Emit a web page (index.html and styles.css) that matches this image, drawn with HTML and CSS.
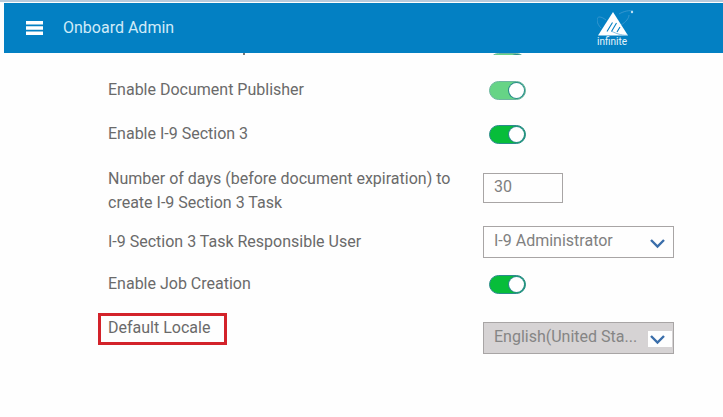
FILE: index.html
```html
<!DOCTYPE html>
<html lang="en">
<head>
    <meta charset="UTF-8">
    <meta name="viewport" content="width=device-width, initial-scale=1.0">
    <title>Onboard Admin</title>
    <link rel="stylesheet" href="styles.css">
</head>
<body>

<header class="header">
    <button class="menu-btn" type="button" aria-label="Menu">
        <svg width="17" height="14" viewBox="0 0 17 14"><path d="M0 0h17v3.5H0zM0 5.2h17v3.5H0zM0 10.4h17v3.5H0z" fill="#fff"/></svg>
    </button>
    <h1 class="title">Onboard Admin</h1>
    <div class="logo">
        <svg width="38" height="27" viewBox="0 0 38 27">
            <path d="M16 2L1 25.500h30z" fill="#fff"/>
            <path d="M15.500 12.500l-5.500 9M19.500 13l-5 8.500M23 17l-3 5" stroke="#0380c3" stroke-width="1.100" fill="none"/>
            <path d="M9 10C4 6 0 6 0 10c0 3 2 6 4 8M22 4c5-3 11-4 14-3M24 15c5-3 8-7 8-10" stroke="#4a9fd2" stroke-width="0.700" fill="none"/>
            <path d="M14 21c6 3 13 5 17 4" stroke="#65afda" stroke-width="0.800" fill="none"/>
            <circle cx="35" cy="2" r="1.200" fill="#bfe0f2"/>
        </svg>
        <span class="logo-text">infinite</span>
    </div>
</header>

<main class="settings">
    <!-- row scrolled under the header -->
    <div class="row row-scrolled">
        <span class="descender"></span>
        <div class="control"><input class="toggle" type="checkbox" aria-label="Setting" checked disabled></div>
    </div>
    <div class="row">
        <label for="publisher">Enable Document Publisher</label>
        <div class="control"><input class="toggle" type="checkbox" id="publisher" checked disabled></div>
    </div>
    <div class="row">
        <label for="section3">Enable I-9 Section 3</label>
        <div class="control"><input class="toggle" type="checkbox" id="section3" checked></div>
    </div>
    <div class="row row-days">
        <label for="days">Number of days (before document expiration) to create I-9 Section 3 Task</label>
        <div class="control"><input class="number" type="text" inputmode="numeric" id="days" value="30"></div>
    </div>
    <div class="row">
        <label for="user">I-9 Section 3 Task Responsible User</label>
        <div class="control select-box">
            <select id="user"><option>I-9 Administrator</option></select>
            <svg class="chevron" width="24" height="16" viewBox="0 0 24 16"><path d="M3 5l6.500 6.500L16 5" fill="none" stroke="#3a6eaa" stroke-width="2.400"/></svg>
        </div>
    </div>
    <div class="row row-jobs">
        <label for="jobs">Enable Job Creation</label>
        <div class="control"><input class="toggle" type="checkbox" id="jobs" checked></div>
    </div>
    <div class="row row-locale">
        <label for="locale"><span class="highlight">Default Locale</span></label>
        <div class="control select-box">
            <select id="locale" disabled><option>English(United Sta...</option></select>
            <svg class="chevron" width="24" height="16" viewBox="0 0 24 16"><path d="M3 5l6.500 6.500L16 5" fill="none" stroke="#3a6eaa" stroke-width="2.400"/></svg>
        </div>
    </div>
</main>

</body>
</html>
```
FILE: styles.css
```css
* { box-sizing: border-box; }
body { margin: 0; background: #fefefe; border-top: 2px solid #b8cbdc; color: #6a6a6a; font: 16px/24px Roboto, "Noto Sans", sans-serif; }
.header { display: flex; align-items: center; height: 50px; margin: 1px 0 0 4px; padding: 0 88px 0 22px; background: #0380c3; color: #d0ebf8; }
.menu-btn { display: flex; padding: 0; border: 0; background: none; cursor: pointer; }
.title { margin: 0 auto 0 20px; font-size: 16px; font-weight: 400; }
.logo { display: flex; flex-direction: column; width: 38px; }
.logo-text { font-size: 10px; line-height: 10px; color: #e5f4fb; }

.settings { padding: 0 49px 24px 108px; }
.row { display: grid; grid-template-columns: 375fr 191fr; align-items: center; min-height: 44px; }
.row-scrolled { height: 2px; min-height: 0; margin-bottom: 13px; overflow: hidden; align-items: end; }
.descender { width: 2px; height: 2px; margin-left: 135px; background: #777; align-self: start; }
.row-days { min-height: 64px; }
.row-days label { padding: 6px 16px 0 0; }
.row-jobs { min-height: 40px; }
.row-locale { align-items: start; padding-top: 9px; }
.row-locale .control { margin-top: 9px; }
.highlight { display: inline-block; margin-left: -10px; padding: 0 14px 2px 7px; border: 3px solid #d3222a; }

.control { display: flex; }
.toggle { appearance: none; display: flex; justify-content: flex-end; width: 37px; height: 19px; margin: 0 0 0 6px; border: 1px solid #2b8c8c; border-radius: 10px; background: #07bd3a; cursor: pointer; }
.toggle::before { content: ""; width: 15px; height: 15px; margin: 1px; border-radius: 50%; background: #fff; box-shadow: 0 0 0 1px #2b8c8c; }
.toggle:disabled { background: #66d486; border-color: #6db6a0; cursor: default; }

.number, select { border: 1px solid #a8a5a5; border-radius: 0; background: #fefefe; color: #808080; font: inherit; padding: 0 10px; opacity: 1; }
.number { width: 80px; height: 30px; padding-bottom: 4px; }
.select-box { position: relative; }
select { appearance: none; width: 100%; height: 32px; padding-bottom: 2px; }
select:disabled { background: #d6d3d4; color: #858585; }
.chevron { position: absolute; right: 2px; top: 9px; background: #fefefe; pointer-events: none; }
```
